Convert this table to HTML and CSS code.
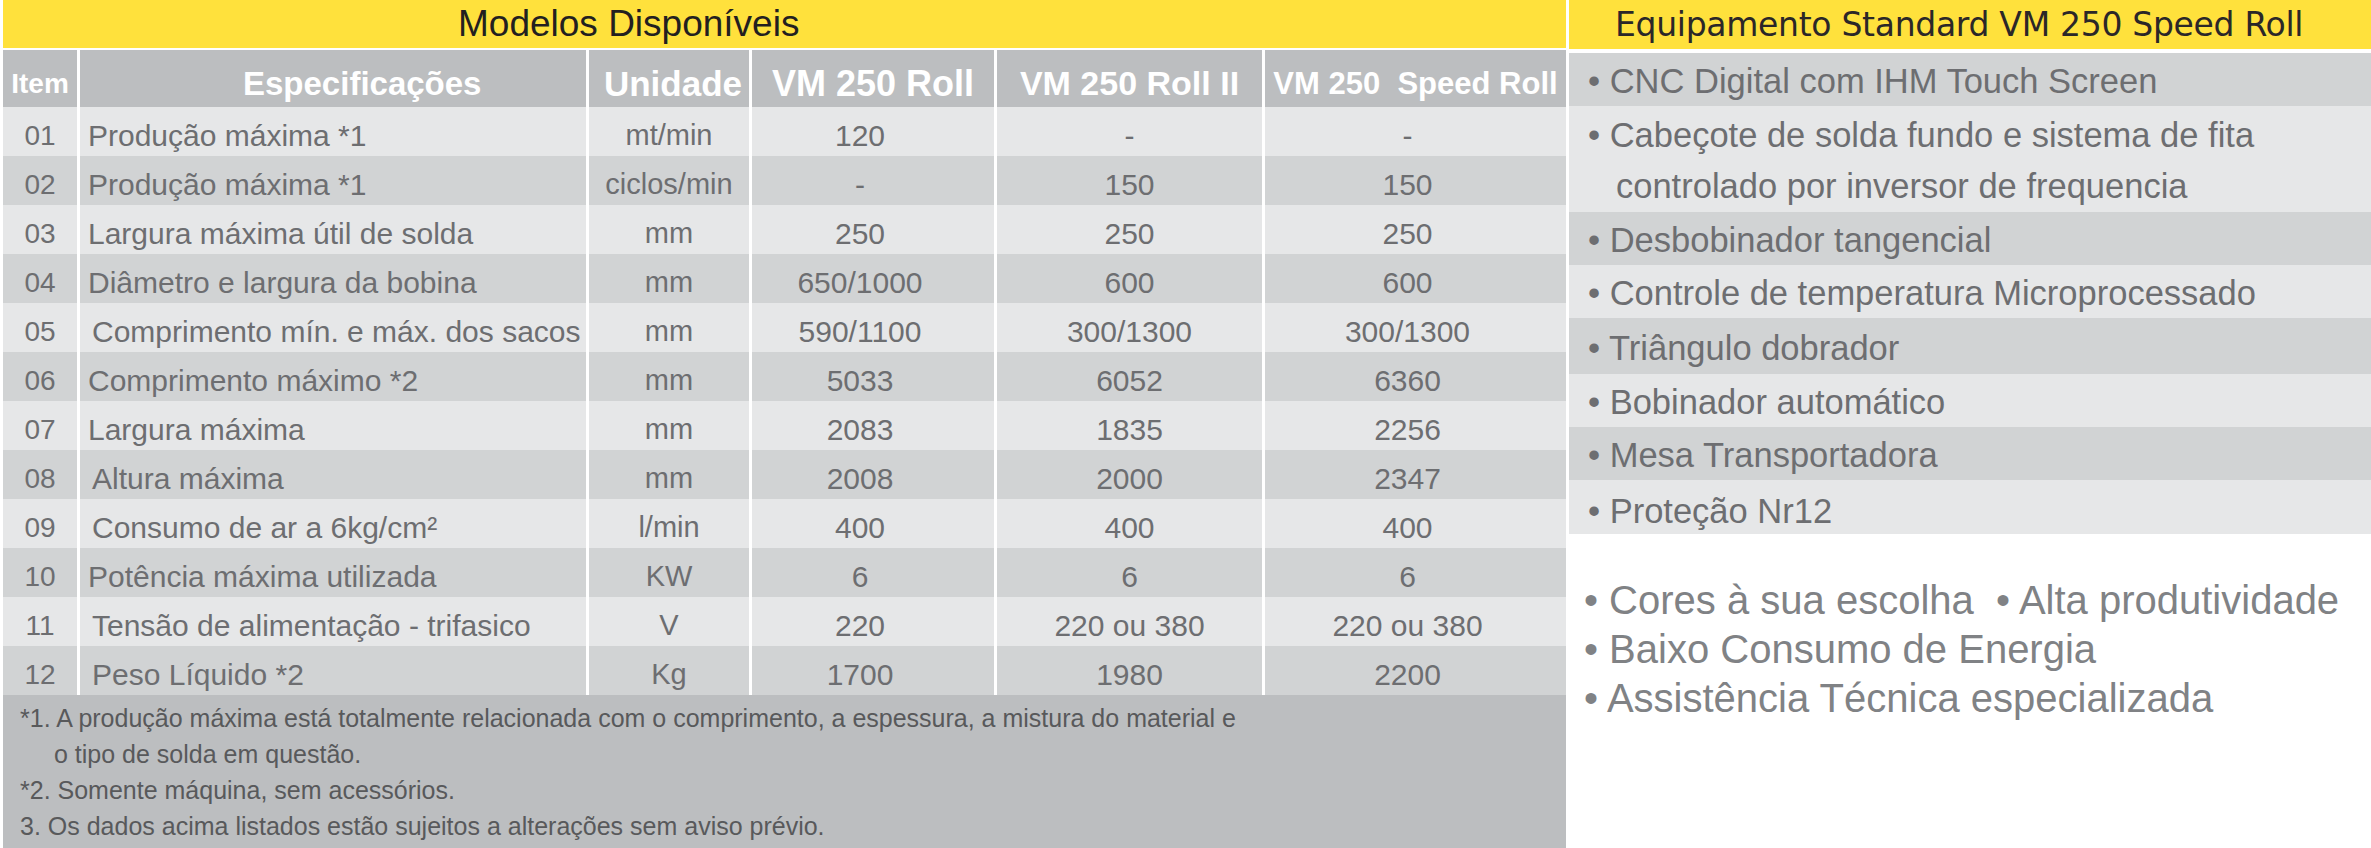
FILE: index.html
```html
<!DOCTYPE html>
<html lang="pt-BR">
<head>
<meta charset="utf-8">
<title>Modelos Disponíveis</title>
<link rel="stylesheet" href="styles.css">
</head>
<body>
<div class="page">
  <section class="left">
    <div class="title-bar"><span class="title-left">Modelos Disponíveis</span></div>
    <div class="tr head">
      <div class="c c-item">Item</div>
      <div class="c c-spec">Especificações</div>
      <div class="c c-unit">Unidade</div>
      <div class="c c-val h-roll">VM 250 Roll</div>
      <div class="c c-val h-roll2">VM 250 Roll II</div>
      <div class="c c-val h-speed">VM 250&nbsp; Speed Roll</div>
    </div>
    <div class="tr odd"><div class="c c-item">01</div><div class="c c-spec">Produção máxima *1</div><div class="c c-unit">mt/min</div><div class="c c-val">120</div><div class="c c-val">-</div><div class="c c-val">-</div></div>
    <div class="tr even"><div class="c c-item">02</div><div class="c c-spec">Produção máxima *1</div><div class="c c-unit">ciclos/min</div><div class="c c-val">-</div><div class="c c-val">150</div><div class="c c-val">150</div></div>
    <div class="tr odd"><div class="c c-item">03</div><div class="c c-spec">Largura máxima útil de solda</div><div class="c c-unit">mm</div><div class="c c-val">250</div><div class="c c-val">250</div><div class="c c-val">250</div></div>
    <div class="tr even"><div class="c c-item">04</div><div class="c c-spec">Diâmetro e largura da bobina</div><div class="c c-unit">mm</div><div class="c c-val">650/1000</div><div class="c c-val">600</div><div class="c c-val">600</div></div>
    <div class="tr odd"><div class="c c-item">05</div><div class="c c-spec ind">Comprimento mín. e máx. dos sacos</div><div class="c c-unit">mm</div><div class="c c-val">590/1100</div><div class="c c-val">300/1300</div><div class="c c-val">300/1300</div></div>
    <div class="tr even"><div class="c c-item">06</div><div class="c c-spec">Comprimento máximo *2</div><div class="c c-unit">mm</div><div class="c c-val">5033</div><div class="c c-val">6052</div><div class="c c-val">6360</div></div>
    <div class="tr odd"><div class="c c-item">07</div><div class="c c-spec">Largura máxima</div><div class="c c-unit">mm</div><div class="c c-val">2083</div><div class="c c-val">1835</div><div class="c c-val">2256</div></div>
    <div class="tr even"><div class="c c-item">08</div><div class="c c-spec ind">Altura máxima</div><div class="c c-unit">mm</div><div class="c c-val">2008</div><div class="c c-val">2000</div><div class="c c-val">2347</div></div>
    <div class="tr odd"><div class="c c-item">09</div><div class="c c-spec ind">Consumo de ar a 6kg/cm²</div><div class="c c-unit">l/min</div><div class="c c-val">400</div><div class="c c-val">400</div><div class="c c-val">400</div></div>
    <div class="tr even"><div class="c c-item">10</div><div class="c c-spec">Potência máxima utilizada</div><div class="c c-unit">KW</div><div class="c c-val">6</div><div class="c c-val">6</div><div class="c c-val">6</div></div>
    <div class="tr odd"><div class="c c-item">11</div><div class="c c-spec ind">Tensão de alimentação - trifasico</div><div class="c c-unit">V</div><div class="c c-val">220</div><div class="c c-val">220 ou 380</div><div class="c c-val">220 ou 380</div></div>
    <div class="tr even"><div class="c c-item">12</div><div class="c c-spec ind">Peso Líquido *2</div><div class="c c-unit">Kg</div><div class="c c-val">1700</div><div class="c c-val">1980</div><div class="c c-val">2200</div></div>
    <div class="notes">
      <p class="note">*1. A produção máxima está totalmente relacionada com o comprimento, a espessura, a mistura do material e</p>
      <p class="note note-cont">o tipo de solda em questão.</p>
      <p class="note">*2. Somente máquina, sem acessórios.</p>
      <p class="note">3. Os dados acima listados estão sujeitos a alterações sem aviso prévio.</p>
    </div>
  </section>
  <section class="right">
    <div class="title-bar"><span class="title-right">Equipamento Standard VM 250 Speed Roll</span></div>
    <ul class="equip">
      <li class="eq dark">• CNC Digital com IHM Touch Screen</li>
      <li class="eq light"><div>• Cabeçote de solda fundo e sistema de fita</div><div class="eq-cont">controlado por inversor de frequencia</div></li>
      <li class="eq dark">• Desbobinador tangencial</li>
      <li class="eq light">• Controle de temperatura Microprocessado</li>
      <li class="eq dark tall">• Triângulo dobrador</li>
      <li class="eq light">• Bobinador automático</li>
      <li class="eq dark">• Mesa Transportadora</li>
      <li class="eq light low">• Proteção Nr12</li>
    </ul>
    <ul class="extras">
      <li>• Cores à sua escolha &nbsp;• Alta produtividade</li>
      <li>• Baixo Consumo de Energia</li>
      <li>• Assistência Técnica especializada</li>
    </ul>
  </section>
</div>
</body>
</html>
```
FILE: styles.css
```css
* { box-sizing: border-box; }
html, body { margin: 0; padding: 0; background: #ffffff; }
body {
  width: 2371px;
  height: 848px;
  overflow: hidden;
  font-family: "Liberation Sans", Arial, Helvetica, sans-serif;
}
.page {
  display: flex;
  gap: 3px;
  padding-left: 3px;
  height: 848px;
}
.left {
  width: 1563px;
  display: flex;
  flex-direction: column;
}
.right {
  flex: 1;
  display: flex;
  flex-direction: column;
}
.title-bar {
  background: #ffe13c;
  height: 48px;
  display: flex;
  align-items: center;
}
.left .title-bar { margin-bottom: 2px; }
.right .title-bar { height: 49px; margin-bottom: 4px; }
.title-left {
  font-size: 37px;
  color: #231f20;
  padding-left: 455px;
}
.title-right {
  font-family: "DejaVu Sans", sans-serif;
  font-size: 33px;
  color: #2b2728;
  padding-left: 46px;
  letter-spacing: -0.3px;
}
.tr {
  display: grid;
  grid-template-columns: 74px 506px 160px 242px 265px 301px;
  column-gap: 3px;
  height: 49px;
}
.tr.head { height: 57px; }
.c {
  height: 100%;
  padding-top: 8px;
  line-height: 41px;
  color: #6d6e71;
  white-space: nowrap;
  overflow: hidden;
}
.odd .c { background: #e6e7e8; }
.even .c { background: #d1d3d4; }
.c-item { text-align: center; font-size: 28px; }
.c-spec { font-size: 30px; padding-left: 8px; }
.c-spec.ind { padding-left: 12px; }
.c-unit {
  text-align: center;
  font-size: 29px;
  font-family: "Liberation Sans Narrow", "Arial Narrow", "Liberation Sans", sans-serif;
}
.c-val { text-align: center; font-size: 30px; }
.c-val:nth-child(4) { padding-right: 26px; }
.c-val:nth-child(6) { padding-right: 16px; }
.head .c {
  background: #bcbec0;
  color: #ffffff;
  font-weight: bold;
  font-size: 33px;
  padding-top: 10px;
  line-height: 47px;
  text-align: center;
}
.head .c-item { font-size: 28px; }
.head .c-spec { text-align: left; padding-left: 163px; }
.head .c-unit {
  font-family: "Liberation Sans", Arial, sans-serif;
  font-size: 35px;
  padding-left: 8px;
}
.head .c-val { padding-right: 0; }
.head .h-roll { font-size: 36px; }
.head .h-roll2 { font-size: 34px; }
.head .h-speed { font-size: 31px; }
.notes {
  flex: 1;
  background: #bcbec0;
  padding-top: 5px;
}
.note {
  margin: 0;
  font-size: 25px;
  line-height: 36px;
  color: #58595b;
  padding-left: 17px;
  white-space: nowrap;
}
.note-cont { padding-left: 51px; }
.equip {
  list-style: none;
  margin: 0;
  padding: 0;
}
.eq {
  font-size: 34.5px;
  padding-top: 4px;
  line-height: 49px;
  color: #6d6e71;
  padding-left: 19px;
  white-space: nowrap;
}
.eq.light:nth-child(2) { line-height: 51px; }
.eq.tall { line-height: 52px; }
.eq.low { padding-top: 8px; line-height: 46px; }
.eq.dark { background: #d1d3d4; }
.eq.light { background: #e6e7e8; }
.eq-cont { padding-left: 28px; }
.extras {
  list-style: none;
  margin: 42px 0 0 0;
  padding: 0 0 0 15px;
}
.extras li {
  font-size: 40px;
  line-height: 49px;
  color: #808285;
  white-space: nowrap;
}
```
